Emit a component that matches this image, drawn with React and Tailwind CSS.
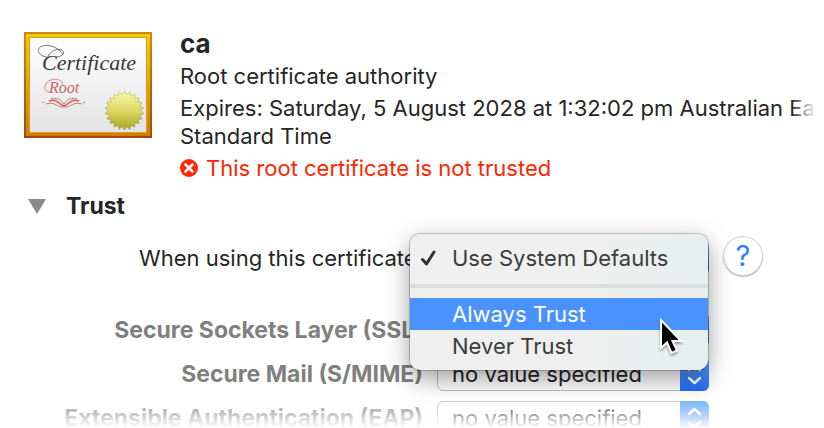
import React from "react";

const sealPoints = Array.from({ length: 44 }, (_, i) => {
  const radius = i % 2 === 0 ? 19.5 : 15.8;
  const angle = (i * Math.PI) / 22 - Math.PI / 2;
  return `${(100.5 + radius * Math.cos(angle)).toFixed(2)},${(78.5 + radius * Math.sin(angle)).toFixed(2)}`;
}).join(" ");

function CertificateIcon() {
  return (
    <svg className="h-[106px] w-32 shrink-0" viewBox="0 0 128 106" role="img" aria-label="Root certificate">
      <defs>
        <linearGradient id="frame" x1="0" y1="0" x2="0" y2="1">
          <stop offset="0" stopColor="#f4cb0c" />
          <stop offset="1" stopColor="#cf7c0c" />
        </linearGradient>
        <linearGradient id="edge" x1="0" y1="0" x2="0" y2="1">
          <stop offset="0" stopColor="#cf8a10" />
          <stop offset="1" stopColor="#9a4a0a" />
        </linearGradient>
        <linearGradient id="paper" x1="0" y1="0" x2="0" y2="1">
          <stop offset="0" stopColor="#ffffff" />
          <stop offset="1" stopColor="#e3e3e3" />
        </linearGradient>
        <linearGradient id="seal" x1="0" y1="0" x2="0" y2="1">
          <stop offset="0" stopColor="#faf9a8" />
          <stop offset="0.5" stopColor="#dcd967" />
          <stop offset="1" stopColor="#a9a41c" />
        </linearGradient>
      </defs>
      <rect width="128" height="106" fill="url(#edge)" />
      <rect x="2" y="2" width="124" height="102" fill="url(#frame)" />
      <rect x="5" y="5" width="118" height="96" fill="#de9d12" />
      <rect x="6" y="6" width="116" height="94" fill="url(#paper)" />
      <g fill="none" stroke="#444" strokeWidth="0.7">
        <path d="M26 25C16 26 11 18 17 14.500C24 11 36 16 39 23" />
        <path d="M24 24C28 17 36 16 39 19C41 22 37 25 32 25" />
      </g>
      <text x="18" y="38" fontSize="22" fill="#3a3a3a" fontStyle="italic" fontFamily="'Liberation Serif', serif">Certificate</text>
      <text x="25" y="61" fontSize="16" fill="#cf6262" fontStyle="italic" fontFamily="'Liberation Serif', serif">Root</text>
      <g fill="none" stroke="#d05a5a">
        <path strokeWidth="0.7" d="M26 60C19 61 19 50 27 48C34 46 40 49 38 53" />
        <path strokeWidth="1.4" d="M40 74C35 72 32 66 25 69M40 74C45 72 48 66 55 69" />
        <path strokeWidth="0.8" d="M40 75C33 76 32 69 22 72M40 75C47 76 48 69 58 72M40 72C36 66 32 66 27 67M40 72C44 66 48 66 53 67" />
      </g>
      <circle cx="19" cy="70.500" r="0.8" fill="#d05a5a" />
      <circle cx="60" cy="70.500" r="0.8" fill="#d05a5a" />
      <polygon points={sealPoints} transform="translate(0 0.8)" fill="#777" opacity="0.5" />
      <polygon points={sealPoints} fill="url(#seal)" stroke="#a29d2c" strokeWidth="0.4" />
    </svg>
  );
}

function PopupSelect({ id, value }) {
  return (
    <div className="relative h-[34px] w-[272px]">
      <select
        id={id}
        defaultValue={value}
        className="h-full w-full appearance-none rounded-md border border-[#bdbdbd] bg-white pl-[14px] pr-8 text-[22px] leading-7 text-[#222]"
      >
        <option>{value}</option>
        <option>Always Trust</option>
        <option>Never Trust</option>
      </select>
      <svg
        className="pointer-events-none absolute inset-y-0 right-0 h-[34px] w-[29px] rounded-r-md bg-linear-to-b from-[#67adf8] to-[#2469f5]"
        viewBox="0 0 29 34"
        fill="none"
        stroke="white"
        strokeWidth="2.5"
        strokeLinecap="round"
        strokeLinejoin="round"
        aria-hidden="true"
      >
        <path d="M9 13L14.500 8L20 13M9 21L14.500 26L20 21" />
      </svg>
    </div>
  );
}

function PolicyRow({ id, label }) {
  return (
    <div className="flex h-11 items-center gap-[14px]">
      <label htmlFor={id} className="w-[423px] shrink-0 whitespace-nowrap text-right text-[23px] font-bold text-[#808080]">
        {label}
      </label>
      <PopupSelect id={id} value="no value specified" />
    </div>
  );
}

function Pointer() {
  return (
    <svg className="pointer-events-none absolute left-[248px] top-[84px] h-10 w-7 drop-shadow-[0_2px_1px_rgba(0,0,0,0.35)]" viewBox="0 0 28 40" aria-hidden="true">
      <path d="M3 2V30L9 24.500L13.500 35L19 32.500L14.500 23H23Z" fill="black" stroke="white" strokeWidth="2" />
    </svg>
  );
}

function TrustMenu() {
  return (
    <div
      role="listbox"
      aria-label="Trust setting"
      className="absolute -left-[27px] -top-[7px] z-10 w-[298px] rounded-[10px] bg-linear-to-r from-[#efefef] from-60% to-[#e5efee] py-2 text-[#3c3c3c] shadow-[0_0_0_1px_rgba(0,0,0,0.2),0_8px_24px_rgba(0,0,0,0.4)]"
    >
      <button role="option" aria-selected="true" className="flex h-8 w-full items-center">
        <svg className="ml-2.5 mr-4 h-4 w-4" viewBox="0 0 16 16" aria-hidden="true">
          <path d="M2.500 9.500L6.500 14L14 2" fill="none" stroke="#333" strokeWidth="3" strokeLinecap="round" strokeLinejoin="round" />
        </svg>
        Use System Defaults
      </button>
      <hr className="my-2.5 h-1 border-0 bg-[#dcdedd]" />
      <button role="option" aria-selected="false" className="flex h-8 w-full items-center bg-[#4a92ff] pl-[42px] text-white">
        Always Trust
      </button>
      <button role="option" aria-selected="false" className="flex h-8 w-full items-center pl-[42px]">
        Never Trust
      </button>
      <Pointer />
    </div>
  );
}

export default function App() {
  return (
    <main className="relative h-screen overflow-hidden bg-white font-['Inter',sans-serif] text-[22px] leading-7 text-[#262626]">
      <header className="flex gap-7 pl-6 pt-[30px]">
        <div className="pt-0.5">
          <CertificateIcon />
        </div>
        <div className="flex flex-col gap-1 whitespace-nowrap">
          <h1 className="text-[26px] font-bold leading-7">ca</h1>
          <p>Root certificate authority</p>
          <p>
            Expires: Saturday, 5 August 2028 at 1:32:02 pm Australian Eastern
            <br />
            Standard Time
          </p>
          <p className="flex items-center gap-2 text-[#ff2600]">
            <svg className="h-[18px] w-[18px]" viewBox="0 0 18 18" aria-hidden="true">
              <circle cx="9" cy="9" r="9" fill="#ff2600" />
              <path d="M5.500 5.500L12.500 12.500M12.500 5.500L5.500 12.500" stroke="white" strokeWidth="2.6" strokeLinecap="round" />
            </svg>
            This root certificate is not trusted
          </p>
        </div>
      </header>

      <section>
        <h2 className="mt-2.5 text-[23px] font-bold">
          <button aria-expanded="true" className="flex items-center gap-5 pl-7">
            <svg className="h-[15px] w-[18px]" viewBox="0 0 18 15" aria-hidden="true">
              <path d="M0 0H18L9 15Z" fill="#8a8a8a" />
            </svg>
            Trust
          </button>
        </h2>
        <div className="mt-4 flex h-11 items-center gap-[14px]">
          <label htmlFor="trust" className="w-[423px] shrink-0 whitespace-nowrap text-right">
            When using this certificate:
          </label>
          <div className="relative">
            <PopupSelect id="trust" value="Use System Defaults" />
            <TrustMenu />
          </div>
          <button
            aria-label="Help"
            className="flex h-10 w-10 items-center justify-center self-start rounded-full border border-[#d0d0d0] bg-white text-[29px] text-[#2a7fff] shadow-[0_1px_1px_rgba(0,0,0,0.25)]"
          >
            ?
          </button>
        </div>
        <div className="mt-7">
          <PolicyRow id="ssl" label="Secure Sockets Layer (SSL)" />
          <PolicyRow id="smime" label="Secure Mail (S/MIME)" />
          <PolicyRow id="eap" label="Extensible Authentication (EAP)" />
        </div>
      </section>
      <div className="pointer-events-none absolute inset-y-0 right-0 w-8 bg-linear-to-r from-transparent to-white to-75%" />
      <div className="pointer-events-none absolute inset-x-0 bottom-0 h-8 bg-linear-to-b from-transparent to-white" />
    </main>
  );
}
